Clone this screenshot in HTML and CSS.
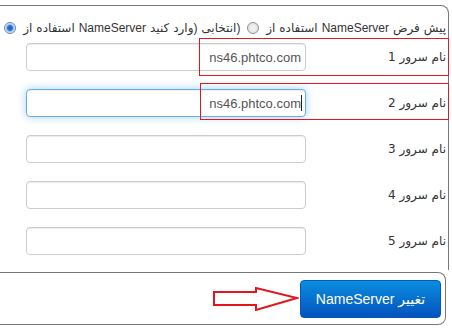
FILE: index.html
```html
<!doctype html>
<html lang="fa">
<head>
    <meta charset="utf-8">
    <title>NameServer</title>
    <link rel="stylesheet" href="styles.css">
</head>
<body>
    <div class="ns-panel">
        <div class="ns-choice">پیش فرض NameServer استفاده از <input type="radio" name="nschoice"> (انتخابی (وارد کنید NameServer استفاده از <input type="radio" name="nschoice" checked></div>
        <div class="ns-rows">
            <div class="ns-row">
                <label>نام سرور 1</label>
                <div class="ns-box"><input class="ns-field" type="text" value="ns46.phtco.com"></div>
            </div>
            <div class="ns-row">
                <label>نام سرور 2</label>
                <div class="ns-box"><input class="ns-field is-focus" type="text" value="ns46.phtco.com"><span class="caret"></span></div>
            </div>
            <div class="ns-row">
                <label>نام سرور 3</label>
                <div class="ns-box"><input class="ns-field" type="text"></div>
            </div>
            <div class="ns-row">
                <label>نام سرور 4</label>
                <div class="ns-box"><input class="ns-field" type="text"></div>
            </div>
            <div class="ns-row">
                <label>نام سرور 5</label>
                <div class="ns-box"><input class="ns-field" type="text"></div>
            </div>
        </div>
    </div>

    <div class="ns-actions">
        <svg class="arrow" width="86" height="24" viewBox="0 0 86 24">
            <polygon points="1,5 43,5 43,1 84,11 43,23 43,18 1,18" fill="none" stroke="#e3161e" stroke-width="2" stroke-linejoin="miter"/>
        </svg>
        <button class="btn-primary">تغییر NameServer</button>
    </div>

    <div class="mark mark-1"></div>
    <div class="mark mark-2"></div>
</body>
</html>
```

FILE: styles.css
```css
html,
body {
    margin: 0;
    padding: 0;
    background: #fff;
}

body {
    position: relative;
    font-family: "Liberation Sans", "DejaVu Sans", sans-serif;
    font-size: 12px;
    color: #333;
}

.ns-panel {
    direction: rtl;
    box-sizing: border-box;
    height: 265px;
    margin: 5px 3px 0 0;
    padding: 12px 2px 0 0;
    border: 1px solid #777;
    border-left: none;
    border-bottom: none;
    border-top-right-radius: 8px;
}

.ns-choice {
    line-height: 20px;
    white-space: nowrap;
    word-spacing: 0.6px;
}

.ns-choice input {
    -webkit-appearance: none;
    appearance: none;
    width: 12px;
    height: 12px;
    margin: 0 3px;
    vertical-align: -2px;
    border: 1px solid #8f8f8f;
    border-radius: 50%;
    background: radial-gradient(circle, #f6f6f6 0, #dadada 100%);
}

.ns-choice input:checked {
    border-color: #6a86a8;
    background: radial-gradient(circle, #1d5fb8 0, #2f78d2 2.5px, #8fc0ee 3.5px, #e4f0fb 5px);
}

.ns-rows {
    display: flex;
    flex-direction: column;
    gap: 18px;
    margin-top: 5px;
}

.ns-row {
    display: flex;
    align-items: center;
}

.ns-row label {
    flex: 1;
    font-family: "DejaVu Sans", sans-serif;
    font-size: 12px;
    color: #333;
}

.ns-box {
    position: relative;
    width: 280px;
    height: 28px;
    margin-left: 26px;
}

.ns-field {
    box-sizing: border-box;
    width: 100%;
    height: 28px;
    margin: 0;
    padding: 0 4px;
    direction: ltr;
    text-align: right;
    font-family: "Liberation Sans", sans-serif;
    font-size: 13px;
    color: #555;
    background: #fff;
    border: 1px solid #ccc;
    border-radius: 4px;
    box-shadow: inset 0 1px 1px rgba(0, 0, 0, 0.075);
    outline: none;
}

.ns-field.is-focus {
    border-color: #66afe9;
    box-shadow: inset 0 1px 1px rgba(0, 0, 0, 0.075), 0 0 8px rgba(102, 175, 233, 0.6);
}

.caret {
    position: absolute;
    right: 4px;
    top: 6px;
    width: 1px;
    height: 16px;
    background: #222;
}

.ns-actions {
    display: flex;
    justify-content: flex-end;
    align-items: center;
    gap: 1px;
    box-sizing: border-box;
    height: 53px;
    margin: 2px 6px 0 0;
    padding: 0 4px 0 0;
    border: 1px solid #777;
    border-left: none;
    border-radius: 0 8px 8px 0;
}

.arrow {
    display: block;
}

.btn-primary {
    direction: rtl;
    width: 141px;
    height: 38px;
    margin: 0;
    padding: 0;
    font-family: "Liberation Sans", "DejaVu Sans", sans-serif;
    font-size: 14px;
    color: #fff;
    background: linear-gradient(#0a8de0, #0453bd);
    border: 1px solid #0458b7;
    border-radius: 4px;
}

.mark {
    position: absolute;
    box-sizing: border-box;
    border: 1px solid #e3161e;
    pointer-events: none;
}

.mark-1 {
    left: 199px;
    top: 38px;
    width: 250px;
    height: 38px;
}

.mark-2 {
    left: 200px;
    top: 83px;
    width: 249px;
    height: 37px;
}
```
